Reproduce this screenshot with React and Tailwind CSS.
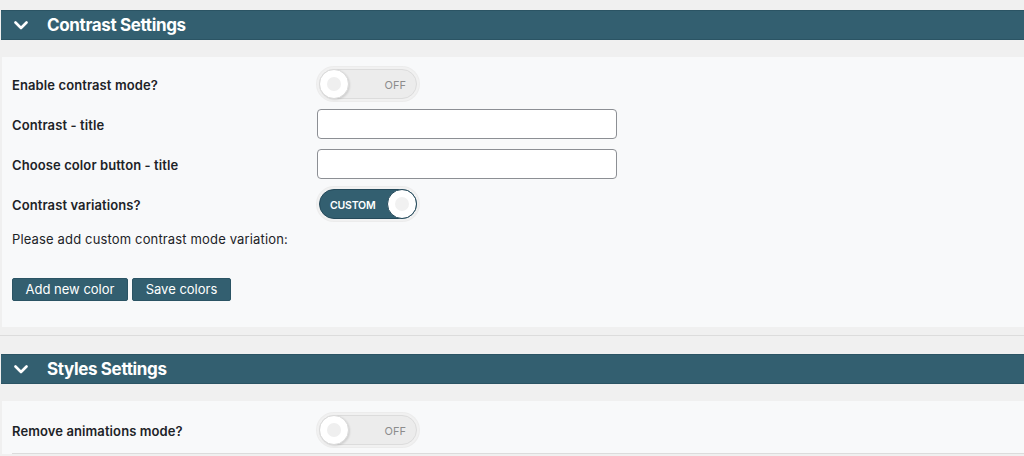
import React from 'react'

const Chevron = () => (
  <svg width="14" height="9" viewBox="0 0 14 9" fill="none" className="shrink-0">
    <path d="M1.5 1.5 7 7l5.5-5.5" stroke="white" strokeWidth="2.6" strokeLinecap="round" strokeLinejoin="round" />
  </svg>
)

const SectionHeader = ({ title }) => (
  <div className="ml-[1px] flex h-[30px] items-center border-y border-[#2b5464] bg-[#335f70] pl-[13px]">
    <Chevron />
    <span className="ml-[19px] pt-[2px] text-[17px] font-bold tracking-[-0.35px] text-white">{title}</span>
  </div>
)

const Toggle = ({ on, label }) => (
  <div className="rounded-full bg-[#f1f1f1] p-[2px] shadow-[0_0_0_1px_#ececec]">
    <div
      className={
        on
          ? 'relative flex h-[30px] w-[98px] items-center rounded-full border border-[#24495a] bg-[#335f70]'
          : 'relative flex h-[30px] w-[98px] items-center rounded-full border border-[#dcdcdc] bg-[#ececec]'
      }
    >
      {on ? (
        <>
          <span className="ml-[10px] pt-[3px] text-[10.5px] font-semibold tracking-[-0.2px] text-white">{label}</span>
          <span className="absolute right-[-1px] top-[-1px] flex h-[30px] w-[30px] items-center justify-center rounded-full border border-[#24495a] bg-white">
            <span className="h-[14px] w-[14px] rounded-full bg-[#f1f1f1]" />
          </span>
        </>
      ) : (
        <>
          <span className="absolute left-[-1px] top-[-1px] flex h-[30px] w-[30px] items-center justify-center rounded-full border border-[#dadada] bg-white shadow-[1px_1px_2px_rgba(0,0,0,0.12)]">
            <span className="h-[14px] w-[14px] rounded-full bg-[#efefef]" />
          </span>
          <span className="ml-auto mr-[10px] pt-[2px] text-[11px] text-[#8c8c8c]">{label}</span>
        </>
      )}
    </div>
  </div>
)

const Row = ({ label, children }) => (
  <div className="flex h-[40px] items-center">
    <div className="w-[305px] shrink-0 pt-[3px] text-[13px] font-semibold tracking-[0.1px] text-[#1d2327]">{label}</div>
    {children}
  </div>
)

const TextInput = () => (
  <input
    type="text"
    className="h-[30px] w-[300px] rounded-[4px] border border-[#8c8f94] bg-white px-2 text-[13px] outline-none"
  />
)

const App = () => {
  return (
    <div className="min-h-[456px] bg-[#f0f0f0] pt-[10px] font-['Inter','Liberation_Sans',sans-serif]">
      <SectionHeader title="Contrast Settings" />

      <div className="ml-[2px] mt-[17px] bg-[#f8f9fa] pb-[26px] pl-[10px] pt-[7px]">
        <Row label="Enable contrast mode?">
          <Toggle label="OFF" />
        </Row>
        <Row label="Contrast - title">
          <TextInput />
        </Row>
        <Row label="Choose color button - title">
          <TextInput />
        </Row>
        <Row label="Contrast variations?">
          <Toggle on label="CUSTOM" />
        </Row>
        <div className="flex h-[28px] items-center pt-[3px] text-[13px] tracking-[0.15px] text-[#1d2327]">
          Please add custom contrast mode variation:
        </div>
        <div className="mt-[26px] flex gap-[4px]">
          <button className="h-[23px] w-[116px] rounded-[2px] border border-[#2b5464] bg-[#335f70] pt-[1px] text-[13px] text-white">
            Add new color
          </button>
          <button className="h-[23px] w-[99px] rounded-[2px] border border-[#2b5464] bg-[#335f70] pt-[1px] text-[13px] text-white">
            Save colors
          </button>
        </div>
      </div>

      <div className="mt-[8px] h-[1px] bg-[#dcdcdc]" />

      <div className="mt-[18px]">
        <SectionHeader title="Styles Settings" />
      </div>

      <div className="ml-[2px] mt-[17px] bg-[#f8f9fa] pl-[10px] pt-[9px]">
        <div className="border-b border-[#dcdcdc] pb-[3px]">
          <Row label="Remove animations mode?">
            <Toggle label="OFF" />
          </Row>
        </div>
      </div>
    </div>
  )
}

export default App
